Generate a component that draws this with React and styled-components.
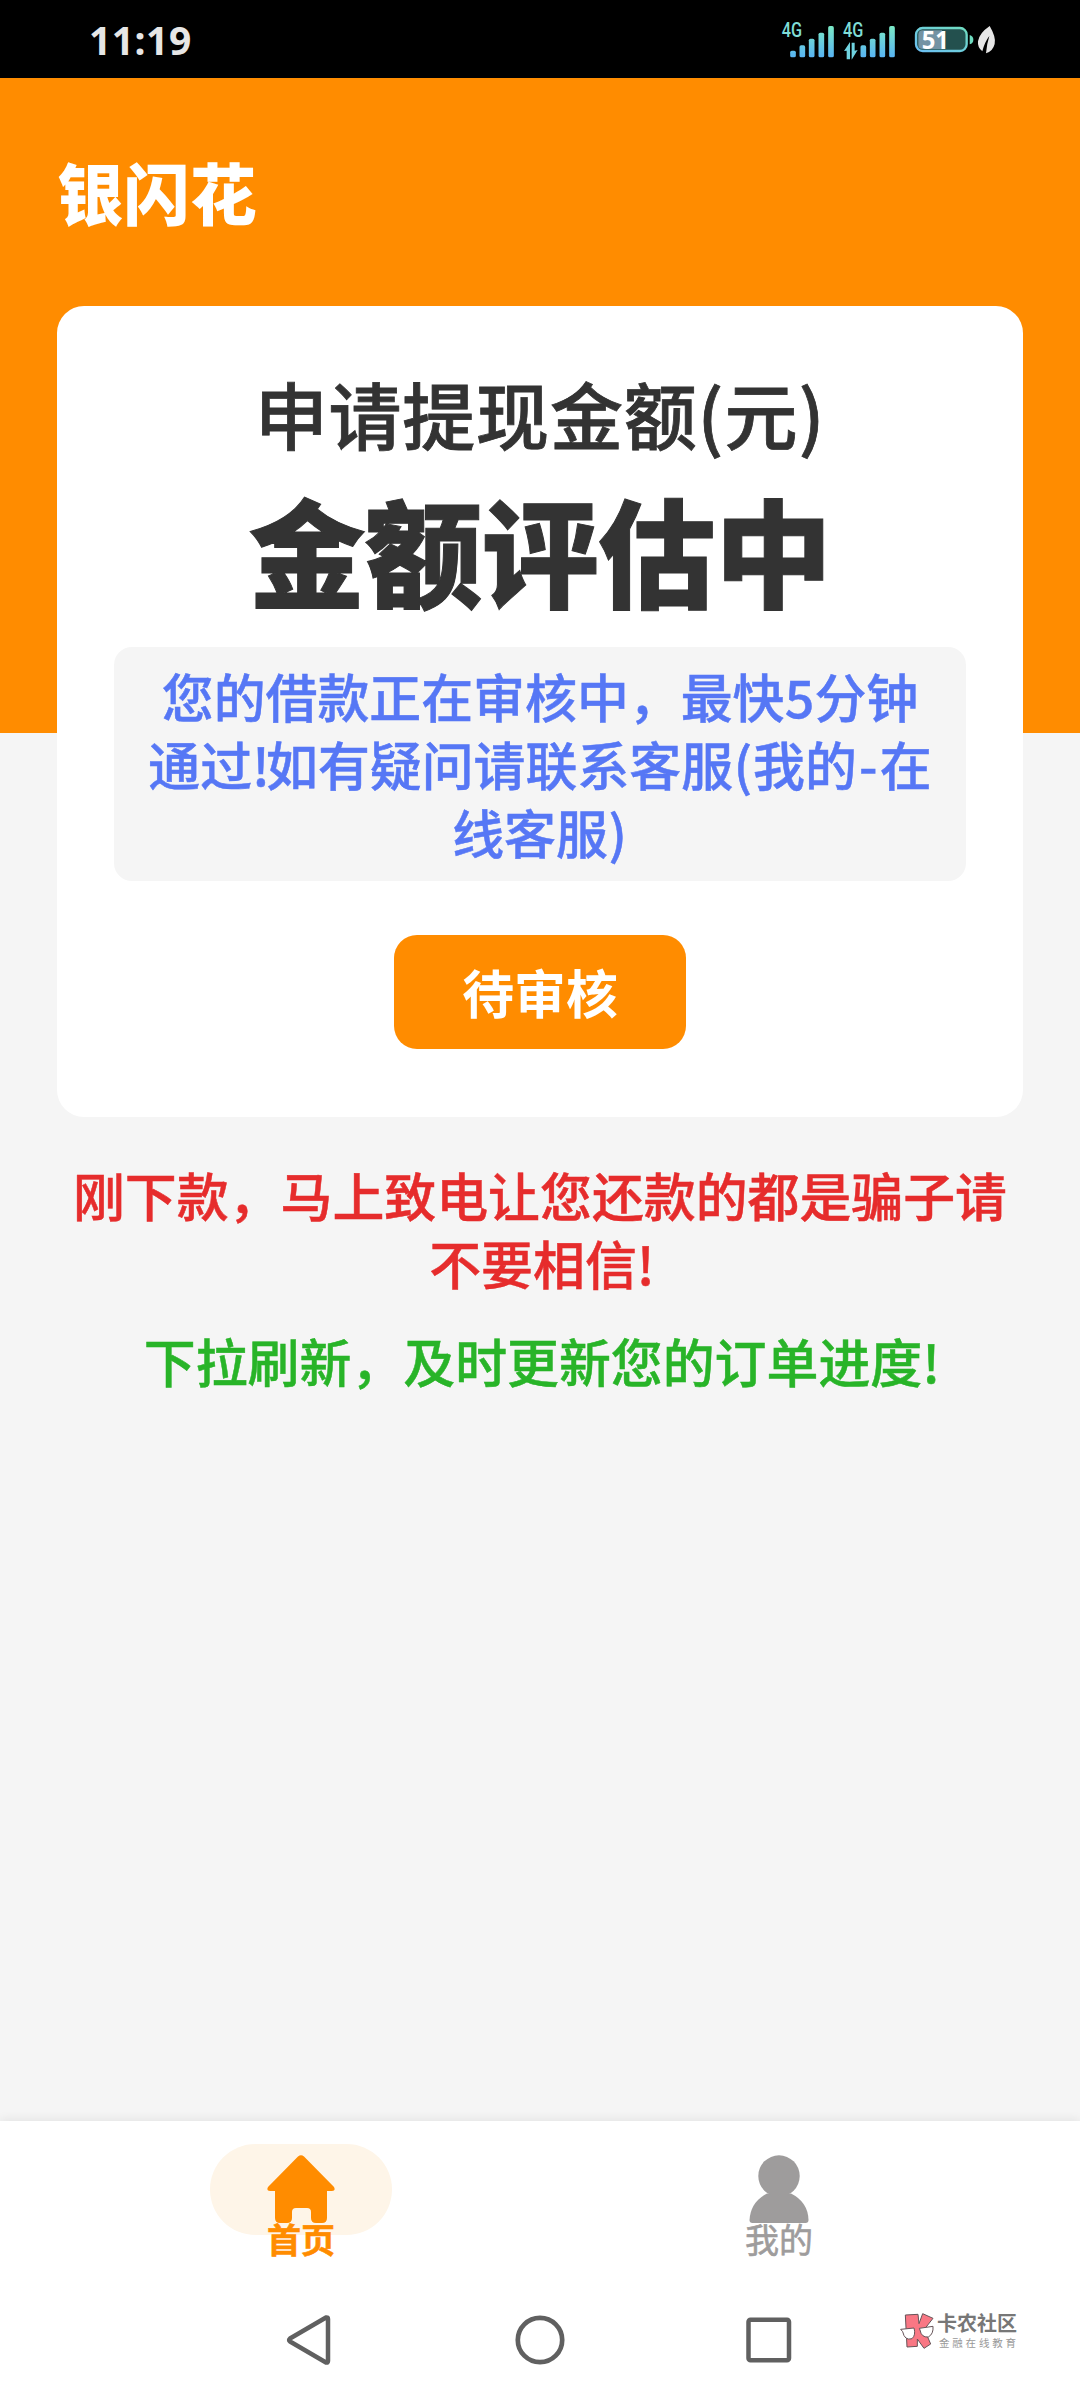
import React from "react";
import styled, { createGlobalStyle } from "styled-components";

const GlobalStyle = createGlobalStyle`
  * { box-sizing: border-box; }
  body { margin: 0; background: #f5f5f5; }
`;

const Screen = styled.div`
  width: 1080px;
  height: 2400px;
  display: flex;
  flex-direction: column;
  overflow: hidden;
  background: #f5f5f5;
  font-family: "Noto Sans CJK SC", sans-serif;
  font-weight: 500;
`;

const StatusBar = styled.header`
  flex: none;
  height: 78px;
  display: flex;
  justify-content: space-between;
  background: #000;
  padding: 0 60px 0 89px;
`;

const Clock = styled.time`
  font-family: "Noto Sans", sans-serif;
  font-weight: 700;
  font-size: 39px;
  line-height: 80px;
  letter-spacing: 0.5px;
  color: #e6e6e6;
`;

const Page = styled.main`
  flex: 1;
  display: flex;
  flex-direction: column;
  padding: 0 57px;
  background: linear-gradient(#ff8c00 655px, #f5f5f5 655px);
`;

const AppTitle = styled.h1`
  margin: 0;
  height: 228px;
  padding-top: 78px;
  font-size: 66.5px;
  line-height: 70px;
  font-weight: 900;
  color: #fff;
`;

const Card = styled.section`
  height: 811px;
  border-radius: 27px;
  background: #fff;
  padding: 0 57px;
  display: flex;
  flex-direction: column;
  align-items: center;
`;

const AmountLabel = styled.h2`
  margin: 58px 0 0;
  font-size: 73px;
  line-height: 96px;
  font-weight: 500;
  letter-spacing: 0.8px;
  color: #333;
  -webkit-text-stroke: 0.8px #333;
  white-space: nowrap;
`;

const WideMark = styled.span`
  display: inline-block;
  width: 27px;
  text-align: center;
`;

const Amount = styled.strong`
  margin-top: 8px;
  font-size: 117px;
  line-height: 160px;
  font-weight: 900;
  letter-spacing: -0.4px;
  color: #333;
  -webkit-text-stroke: 1px #333;
  white-space: nowrap;
`;

const Notice = styled.p`
  margin: 19px 0 0;
  width: 852px;
  height: 234px;
  padding: 15px 0 0;
  border-radius: 18px;
  background: #f5f5f5;
  text-align: center;
  white-space: nowrap;
  font-size: 51.9px;
  line-height: 68px;
  color: #5677f5;
  -webkit-text-stroke: 0.5px #5677f5;
`;

const Mark = styled.span`
  display: inline-block;
  width: ${(p) => p.$w}px;
  text-align: center;
`;

const StateButton = styled.button`
  margin-top: 54px;
  width: 292px;
  height: 114px;
  border: 0;
  border-radius: 23px;
  background: #ff8c00;
  color: #fff;
  font: 700 51.8px/68px "Noto Sans CJK SC", sans-serif;
`;

const Hint = styled.p`
  margin: ${(p) => p.$top}px 0 0;
  text-align: center;
  white-space: nowrap;
  font-size: 51.9px;
  line-height: 68.3px;
  color: ${(p) => p.$color};
  -webkit-text-stroke: 0.5px ${(p) => p.$color};
`;

const TabBar = styled.nav`
  flex: none;
  height: 159px;
  display: flex;
  padding: 23px 62px 0;
  background: #fff;
  box-shadow: 0 -2px 9px rgba(0, 0, 0, 0.07);
`;

const Tab = styled.a`
  width: 478px;
  display: flex;
  flex-direction: column;
  align-items: center;
  font-size: 34px;
  line-height: 40px;
  font-weight: ${(p) => (p.$active ? 700 : 400)};
  color: ${(p) => (p.$active ? "#ff8c00" : "#9e9c9c")};
  -webkit-text-stroke: 0.6px ${(p) => (p.$active ? "#ff8c00" : "#9e9c9c")};
`;

const TabPill = styled.span`
  width: 182px;
  height: 91px;
  border-radius: 46px;
  padding-top: 11px;
  display: flex;
  justify-content: center;
  background: ${(p) => (p.$active ? "#fef5e8" : "transparent")};
`;

const TabLabel = styled.span`
  margin-top: -16px;
`;

const SystemBar = styled.footer`
  flex: none;
  height: 120px;
  display: flex;
  align-items: center;
  gap: 170px;
  padding-left: 280px;
  background: #fff;
`;

const Brand = styled.div`
  display: flex;
  margin-left: -70px;
  margin-top: -20px;
`;

const BrandText = styled.div`
  display: flex;
  flex-direction: column;
  margin-left: 1px;
  white-space: nowrap;
`;

const BrandName = styled.span`
  font-size: 20px;
  line-height: 24px;
  font-weight: 700;
  color: #777;
`;

const BrandSub = styled.span`
  margin-left: 2px;
  font-size: 10.5px;
  line-height: 15px;
  letter-spacing: 2.8px;
  font-weight: 400;
  color: #999;
`;

const Bars = ({ bars }) =>
  bars.map(([cx, top]) => (
    <rect key={cx} x={cx - 8.5} y={top} width="17" height={172 - top} rx="5" fill="url(#sig)" />
  ));

const StatusIcons = () => (
  <svg width="260" height="78" viewBox="0 0 780 234">
    <defs>
      <linearGradient id="sig" gradientUnits="userSpaceOnUse" x1="0" y1="172" x2="0" y2="75">
        <stop offset="0" stopColor="#58b4f4" />
        <stop offset="1" stopColor="#7cebc4" />
      </linearGradient>
      <linearGradient id="bat" x1="0" y1="1" x2="1" y2="0">
        <stop offset="0" stopColor="#6cc0f4" />
        <stop offset="1" stopColor="#6fdcc0" />
      </linearGradient>
    </defs>
    {[65, 249].map((x) => (
      <text key={x} x={x} y="111" textLength="61" lengthAdjust="spacingAndGlyphs" fontFamily="Roboto, sans-serif" fontSize="58" fill="#7fdcd6">4G</text>
    ))}
    <Bars bars={[[99, 152], [127, 136], [155, 116], [184, 98], [213, 78]]} />
    <Bars bars={[[310, 136], [338, 116], [367, 98], [396, 78]]} />
    <path d="M252 153L270 126V178H260V152ZM275 128H284V152L293 150L275 179Z" fill="#6fd3e0" />
    <rect x="468" y="84" width="152" height="69" rx="20" fill="#23504e" stroke="url(#bat)" strokeWidth="7" />
    <path d="M488 91H546V147H488Q475 147 475 134V104Q475 91 488 91Z" fill="#7493a3" />
    <path d="M629 105Q640 108 640 119T629 133Z" fill="#6fdcc0" />
    <text x="485" y="146" textLength="82" lengthAdjust="spacingAndGlyphs" fontFamily="Noto Sans, sans-serif" fontWeight="700" fontSize="73" fill="#fff">51</text>
    <path d="M689 78Q709 112 704 132Q698 155 678 160Q680 133 688 108Q674 126 667 154Q652 143 654 124Q657 100 689 78Z" fill="#e6e6e6" />
  </svg>
);

const HomeIcon = () => (
  <svg width="70" height="70" viewBox="0 0 70 70">
    <path d="M32 1.5Q35 -1 38 1.5L68 32Q70 36 66 36H61V63Q61 68 56 68H50Q45 68 45 63V57Q45 53 41 53H30Q26 53 26 57V63Q26 68 21 68H14Q9 68 9 63V36H4Q0 36 2 32Z" fill="#ff8c00" />
  </svg>
);

const UserIcon = () => (
  <svg width="60" height="70" viewBox="0 0 60 70">
    <circle cx="30" cy="21" r="20.7" fill="#9e9c9c" />
    <path d="M18 38.500H42Q59 47 59.500 65Q59.500 68 56.500 68H3.500Q0.500 68 0.500 65Q1.500 47 18 38.500Z" fill="#9e9c9c" />
  </svg>
);

const BrandIcon = () => (
  <svg width="36" height="38" viewBox="0 0 108 114">
    <g stroke="#665458" strokeWidth="3" strokeLinejoin="round">
      <path d="M16 12L54 10L57 38L68 8L99 22L73 55L92 99L72 112L52 84V106L21 108Z" fill="#f97784" />
      <path d="M2 55L42 51Q48 72 36 83Q14 90 8 62ZM58 52L99 46Q101 69 85 78Q64 80 60 57Z" fill="#fff" />
    </g>
  </svg>
);

export default function App() {
  return (
    <Screen>
      <GlobalStyle />
      <StatusBar>
        <Clock>11:19</Clock>
        <StatusIcons />
      </StatusBar>
      <Page>
        <AppTitle>银闪花</AppTitle>
        <Card>
          <AmountLabel>申请提现金额<WideMark>(</WideMark>元<WideMark>)</WideMark></AmountLabel>
          <Amount>金额评估中</Amount>
          <Notice>
            您的借款正在审核中，最快<Mark $w={30}>5</Mark>分钟
            <br />
            通过<Mark $w={14}>!</Mark>如有疑问请联系客服<Mark $w={20}>(</Mark>我的<Mark $w={23}>-</Mark>在
            <br />
            线客服<Mark $w={20}>)</Mark>
          </Notice>
          <StateButton>待审核</StateButton>
        </Card>
        <Hint $top={44} $color="#e62c2c">
          刚下款，马上致电让您还款的都是骗子请
          <br />
          不要相信<Mark $w={14}>!</Mark>
        </Hint>
        <Hint $top={29} $color="#28b428">
          下拉刷新，及时更新您的订单进度<Mark $w={14}>!</Mark>
        </Hint>
      </Page>
      <TabBar>
        <Tab $active>
          <TabPill $active><HomeIcon /></TabPill>
          <TabLabel>首页</TabLabel>
        </Tab>
        <Tab>
          <TabPill><UserIcon /></TabPill>
          <TabLabel>我的</TabLabel>
        </Tab>
      </TabBar>
      <SystemBar>
        <svg width="60" height="60" viewBox="0 0 60 60" fill="none" stroke="#606060" strokeWidth="4.5" strokeLinejoin="round">
          <path d="M10 28.500L46 7.500Q48 7 48 9V51Q48 53 46 52.500L10 31.500Q8.500 30 10 28.500Z" />
        </svg>
        <svg width="60" height="60" viewBox="0 0 60 60" fill="none" stroke="#606060" strokeWidth="4.7">
          <circle cx="30" cy="30" r="22.200" />
        </svg>
        <svg width="60" height="60" viewBox="0 0 60 60" fill="none" stroke="#606060" strokeWidth="4.5">
          <rect x="8.500" y="9.700" width="40.500" height="40.500" rx="2" />
        </svg>
        <Brand>
          <BrandIcon />
          <BrandText>
            <BrandName>卡农社区</BrandName>
            <BrandSub>金融在线教育</BrandSub>
          </BrandText>
        </Brand>
      </SystemBar>
    </Screen>
  );
}
